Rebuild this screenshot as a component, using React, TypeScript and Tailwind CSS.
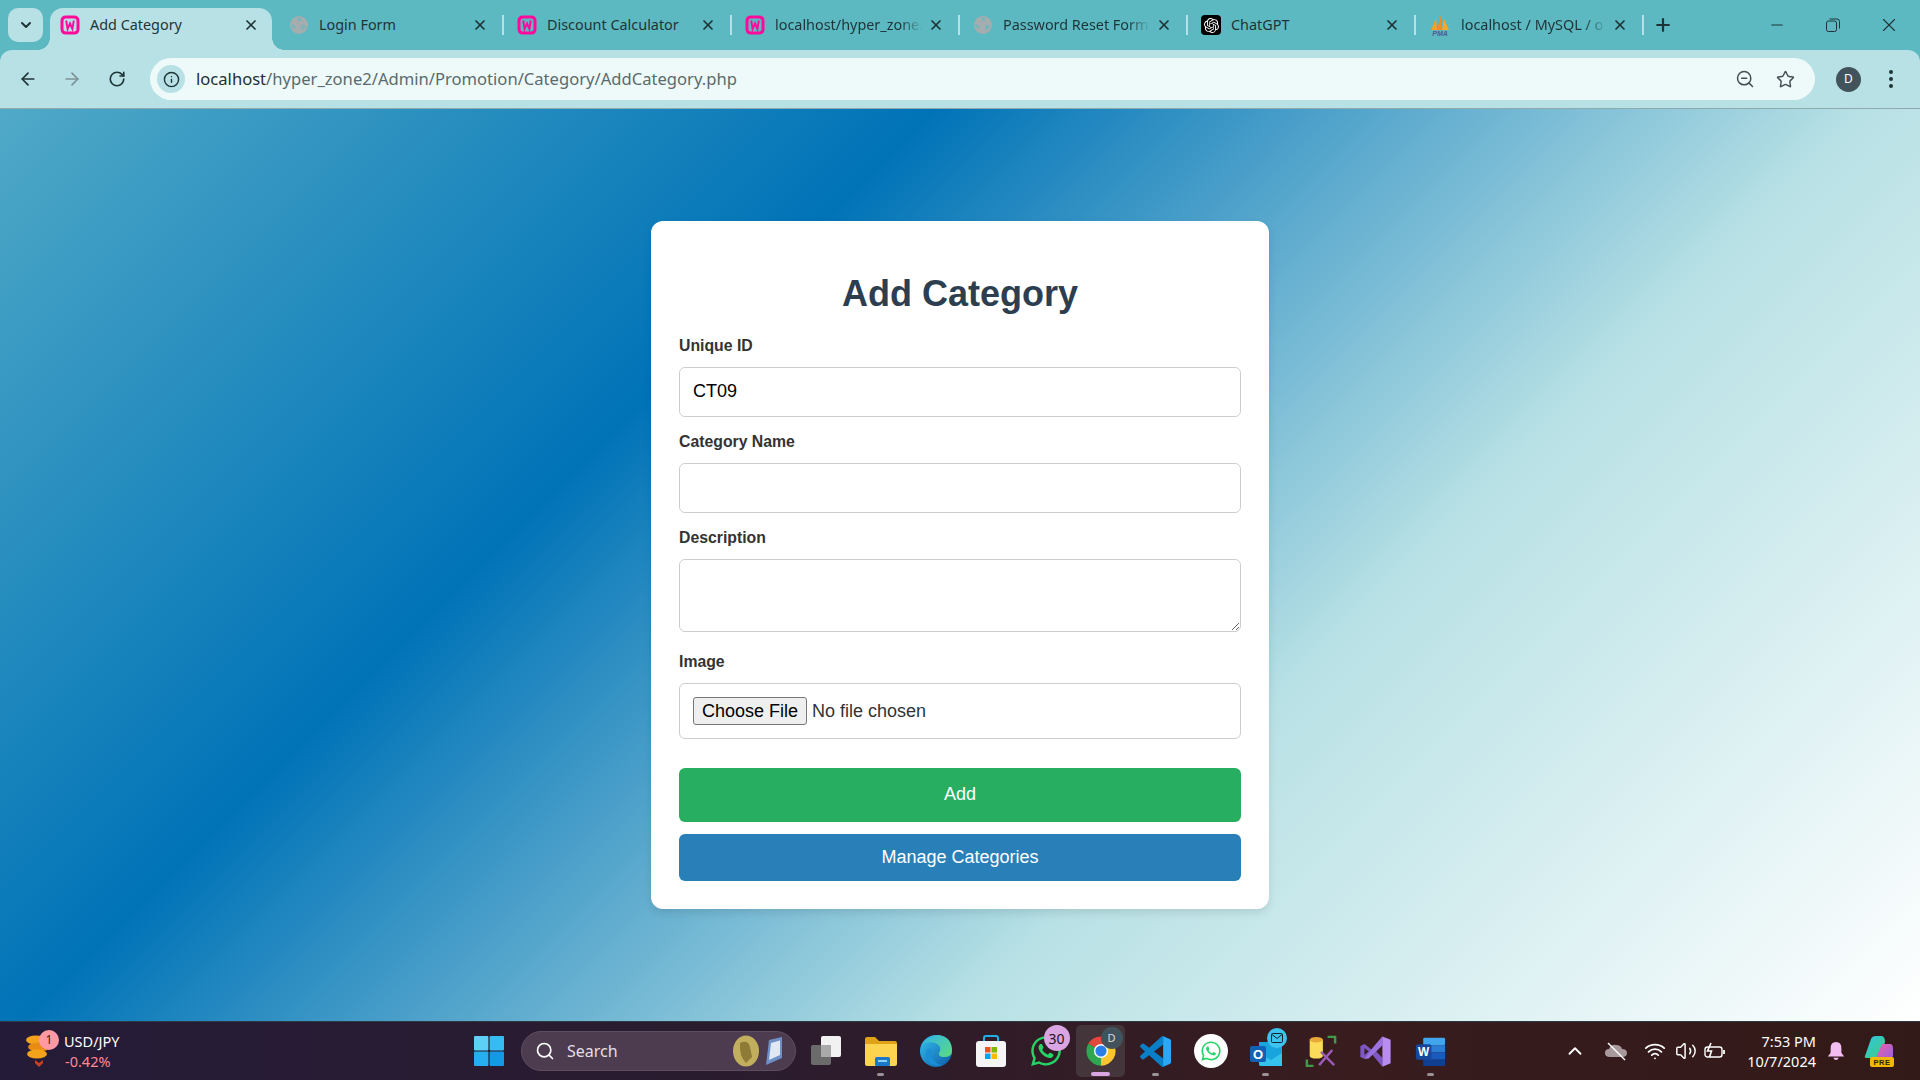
import {
	ArrowLeft,
	ArrowRight,
	ChevronDown,
	ChevronUp,
	Info,
	Minus,
	Plus,
	RotateCw,
	Search,
	Star,
	Volume2,
	Wifi,
	X,
	ZoomOut,
} from "lucide-react";
import { FaWhatsapp } from "react-icons/fa";
import { SiOpenai } from "react-icons/si";
import type { ReactNode } from "react";

const WampIcon = () => (
	<svg viewBox="0 0 20 20" className="w-[20px] h-[20px] shrink-0">
		<path d="M2 6 Q2 2 6 2 H14 Q18 2 18 6 V14 Q18 18 14 18 H6 Q2 18 2 14 Z" fill="none" stroke="#ff0a9c" strokeWidth="3" />
		<path d="M6.2 5.5 L7.6 14 L10 8.5 L12.4 14 L13.8 5.5" fill="none" stroke="#ff0a9c" strokeWidth="1.9" />
	</svg>
);

const GlobeIcon = () => (
	<svg viewBox="0 0 20 20" className="w-[20px] h-[20px] shrink-0">
		<circle cx="10" cy="10" r="9" fill="#a5adae" />
		<path d="M9 2 Q14 3 12 6 Q9 7 8 5 Z M12 10 Q17 9 17 12 Q15 16 12 15 Z M2 9 Q6 9 7 12 Q6 14 4 14 Z" fill="#7fb3ba" />
	</svg>
);

const ChatGptIcon = () => (
	<span className="w-[20px] h-[20px] shrink-0 rounded-[4px] bg-black flex items-center justify-center">
		<SiOpenai className="text-white w-[15px] h-[15px]" />
	</span>
);

const PmaIcon = () => (
	<svg viewBox="0 0 22 22" className="w-[22px] h-[22px] shrink-0">
		<path d="M2 16 L7 4 L8 16 Z" fill="#f4a11c" />
		<path d="M8 16 L12 1 L13 16 Z" fill="#f68b1f" />
		<path d="M13 16 L15 5 L20 16 Z" fill="#f9a825" />
		<text x="11" y="21.5" textAnchor="middle" fontSize="7" fontWeight="700" fontStyle="italic" fill="#4d5a94" fontFamily="Liberation Sans, sans-serif">PMA</text>
	</svg>
);

type TabInfo = { title: string; icon: ReactNode; active?: boolean; fade?: boolean };

const tabs: TabInfo[] = [
	{ title: "Add Category", icon: <WampIcon />, active: true },
	{ title: "Login Form", icon: <GlobeIcon /> },
	{ title: "Discount Calculator", icon: <WampIcon /> },
	{ title: "localhost/hyper_zone2", icon: <WampIcon />, fade: true },
	{ title: "Password Reset Form", icon: <GlobeIcon />, fade: true },
	{ title: "ChatGPT", icon: <ChatGptIcon /> },
	{ title: "localhost / MySQL / o", icon: <PmaIcon />, fade: true },
];

function Tab({ tab }: { tab: TabInfo }) {
	if (tab.active) {
		return (
			<div className="relative w-[222px] mr-[7px] shrink-0 h-[42px] flex items-center pl-[10px] pr-[13px] pb-[8px] bg-[#b8e1e5] rounded-t-[13px] text-[#1f3437]">
				{tab.icon}
				<span className="ml-[10px] flex-1 whitespace-nowrap text-[14.4px]">{tab.title}</span>
				<X size={16} strokeWidth={2.6} className="shrink-0" />
				<span className="absolute bottom-0 left-[-12px] w-[12px] h-[12px] bg-[radial-gradient(circle_at_0_0,transparent_11.5px,#b8e1e5_12px)]" />
				<span className="absolute bottom-0 right-[-12px] w-[12px] h-[12px] bg-[radial-gradient(circle_at_100%_0,transparent_11.5px,#b8e1e5_12px)]" />
			</div>
		);
	}
	return (
		<div className="relative w-[228px] shrink-0 h-[42px] flex items-center pl-[10px] pr-[19px] pb-[8px] text-[#1f3437]">
			{tab.icon}
			<span
				className={`ml-[10px] flex-1 min-w-0 whitespace-nowrap text-[14.4px] ${
					tab.fade ? "[mask-image:linear-gradient(90deg,#000_85%,transparent)]" : ""
				}`}
			>
				{tab.title}
			</span>
			<X size={16} strokeWidth={2.6} className="ml-[6px] shrink-0" />
			<span className="absolute right-[3px] top-[7px] w-[2px] h-[20px] bg-[#b8e1e5]" />
		</div>
	);
}

function WindowsLogo() {
	return (
		<svg viewBox="0 0 30 30" className="w-[30px] h-[30px]">
			<rect x="0" y="0" width="14.4" height="14.4" rx="1" fill="#5cd0f7" />
			<rect x="15.6" y="0" width="14.4" height="14.4" rx="1" fill="#35bdf3" />
			<rect x="0" y="15.6" width="14.4" height="14.4" rx="1" fill="#27aef0" />
			<rect x="15.6" y="15.6" width="14.4" height="14.4" rx="1" fill="#1499e6" />
		</svg>
	);
}

const TaskView = () => (
	<svg viewBox="0 0 32 32" className="w-[32px] h-[32px]">
		<rect x="1" y="10" width="20" height="20" rx="2" fill="#6b6b6b" />
		<rect x="11" y="1" width="20" height="21" rx="2" fill="#f1f1f1" />
		<rect x="11" y="10" width="10" height="12" fill="#a9a9a9" />
	</svg>
);

const Folder = () => (
	<svg viewBox="0 0 34 34" className="w-[34px] h-[34px]">
		<path d="M1 5 Q1 3 3 3 H11 L15 7 H31 Q33 7 33 9 V12 H1 Z" fill="#e0a317" />
		<path d="M1 10 H33 V30 Q33 32 31 32 H3 Q1 32 1 30 Z" fill="#fcd44f" />
		<rect x="11" y="23" width="15" height="9" rx="1.5" fill="#1a78c8" />
		<rect x="14" y="26" width="9" height="2" fill="#8fd0f5" />
	</svg>
);

const Edge = () => (
	<svg viewBox="0 0 34 34" className="w-[34px] h-[34px]">
		<defs>
			<linearGradient id="edgeA" x1="0" y1="0" x2="1" y2="1">
				<stop offset="0" stopColor="#35c1f1" />
				<stop offset="1" stopColor="#0c59a4" />
			</linearGradient>
			<linearGradient id="edgeB" x1="0" y1="0" x2="1" y2="1">
				<stop offset="0" stopColor="#2fb4e8" />
				<stop offset="1" stopColor="#5edc7e" />
			</linearGradient>
		</defs>
		<circle cx="17" cy="17" r="16" fill="url(#edgeA)" />
		<path d="M3 11 Q9 1 20 1 Q33 3 33 17 Q33 23 25 23 Q19 23 20 19 Q24 12 16 9 Q8 7 3 11 Z" fill="url(#edgeB)" />
		<path d="M13 16 Q10 25 19 30 Q24 32 27 30 Q20 33 12 30 Q4 24 8 16 Q10 13 13 16 Z" fill="#1a8fd6" />
	</svg>
);

const Store = () => (
	<svg viewBox="0 0 34 34" className="w-[34px] h-[34px]">
		<path d="M10 9 V4 Q10 2 12 2 H22 Q24 2 24 4 V9" fill="none" stroke="#1fb0ea" strokeWidth="2" />
		<rect x="2" y="7" width="30" height="26" rx="3" fill="#f5f5f5" />
		<rect x="11" y="13" width="5.5" height="5.5" fill="#f25022" />
		<rect x="17.5" y="13" width="5.5" height="5.5" fill="#7fba00" />
		<rect x="11" y="19.5" width="5.5" height="5.5" fill="#00a4ef" />
		<rect x="17.5" y="19.5" width="5.5" height="5.5" fill="#ffb900" />
	</svg>
);

const Chrome = () => (
	<svg viewBox="0 0 24 24" className="w-[32px] h-[32px]">
		<path d="M12 12 L21.5 6.5 A11 11 0 0 0 2.5 6.5 Z" fill="#e2483c" />
		<path d="M12 12 L21.5 6.5 A11 11 0 0 1 12 23 Z" fill="#fbc52f" />
		<path d="M12 12 L12 23 A11 11 0 0 1 2.5 6.5 Z" fill="#2fa750" />
		<circle cx="12" cy="12" r="5.3" fill="#fff" />
		<circle cx="12" cy="12" r="4.2" fill="#2b7de9" />
	</svg>
);

const VsCode = () => (
	<svg viewBox="0 0 24 24" className="w-[31px] h-[31px]">
		<path
			d="M23.15 2.587L18.21.21a1.494 1.494 0 0 0-1.705.29l-9.46 8.63-4.12-3.128a.999.999 0 0 0-1.276.057L.327 7.261A1 1 0 0 0 .326 8.74L3.899 12 .326 15.26a1 1 0 0 0 .001 1.479L1.65 17.94a.999.999 0 0 0 1.276.057l4.12-3.128 9.46 8.63a1.492 1.492 0 0 0 1.704.29l4.942-2.377A1.5 1.5 0 0 0 24 20.06V3.939a1.5 1.5 0 0 0-.85-1.352zm-5.146 14.861L10.826 12l7.178-5.448v10.896z"
			fill="#0a7fc9"
		/>
		<path d="M18 .3 L23.2 2.6 Q24 3 24 4 V20 Q24 21 23.2 21.4 L18 23.7 Z" fill="#2aa8f2" />
	</svg>
);

const Outlook = () => (
	<svg viewBox="0 0 34 34" className="w-[34px] h-[34px]">
		<path d="M10 8 H31 Q33 8 33 10 V32 H12 Q10 32 10 30 Z" fill="#18a5dd" />
		<path d="M10 19 L22 26 L33 19 V32 H12 Q10 32 10 30 Z" fill="#35c3ec" />
		<rect x="1" y="12" width="16" height="16" rx="2" fill="#0f62b6" />
		<text x="9" y="25" textAnchor="middle" fontSize="13" fontWeight="700" fill="#fff" fontFamily="Liberation Sans, sans-serif">O</text>
	</svg>
);

const DbTool = () => (
	<svg viewBox="0 0 34 34" className="w-[32px] h-[32px]">
		<path d="M5 5 V22 Q5 25 12 25 Q19 25 19 22 V5 Z" fill="#fbdc5a" />
		<ellipse cx="12" cy="5" rx="7" ry="3" fill="#e8a93a" />
		<path d="M2 26 V33 H9 M24 2 H32 V9" fill="none" stroke="#3f9a4a" strokeWidth="2.6" />
		<path d="M15 32 L29 16 M17 18 L31 32" stroke="#9a5bb8" strokeWidth="2.6" fill="none" />
	</svg>
);

const VisualStudio = () => (
	<svg viewBox="0 0 24 24" className="w-[33px] h-[33px]">
		<path d="M1 8 L4 6.5 L9 10.5 L17 1 V7.5 L12.5 12 L17 16.5 V23 L9 13.5 L4 17.5 L1 16 Z M4 9.5 V14.5 L7 12 Z" fillRule="evenodd" fill="#7e57c2" />
		<path d="M9 10.5 L17 1 V7.5 L7 17 L4 17.5 Z" fill="#9c72e0" />
		<path d="M17 1 L23 3.5 V20.5 L17 23 Z" fill="#b98cf2" />
	</svg>
);

const Word = () => (
	<svg viewBox="0 0 34 34" className="w-[31px] h-[31px]">
		<rect x="9" y="2" width="24" height="8" rx="1.5" fill="#41a5ee" />
		<rect x="9" y="10" width="24" height="8" fill="#2b7cd3" />
		<rect x="9" y="18" width="24" height="8" fill="#185abd" />
		<rect x="9" y="26" width="24" height="7" rx="1.5" fill="#103f91" />
		<rect x="1" y="9" width="17" height="17" rx="2" fill="#15479d" />
		<text x="9.5" y="22" textAnchor="middle" fontSize="13" fontWeight="700" fill="#fff" fontFamily="Liberation Sans, sans-serif">W</text>
	</svg>
);

const Coins = () => (
	<svg viewBox="0 0 28 36" className="w-[28px] h-[36px]">
		<ellipse cx="11" cy="7" rx="10" ry="4.5" fill="#f4a11c" />
		<ellipse cx="14" cy="14" rx="11" ry="4.5" fill="#e88d12" />
		<ellipse cx="12" cy="21" rx="10" ry="4.5" fill="#f4a11c" />
		<path d="M10 27 L14 30 L18 27 L18 30 L14 34 L10 30 Z" fill="#c9401c" />
	</svg>
);

const Medal = () => (
	<svg viewBox="0 0 52 32" className="w-[52px] h-[32px]">
		<path d="M38 5 L51 2 V23 L35 30 Z" fill="#6f90c7" />
		<path d="M40 8 L49 5.5 V20 L38 25 Z" fill="#dfe8f4" />
		<ellipse cx="15" cy="16" rx="13" ry="15.5" fill="#c2af5e" />
		<path d="M9 8 Q17 4 19 12 L21 22 L15 28 Q8 21 9 8 Z" fill="#8d7b36" />
	</svg>
);

const Copilot = () => (
	<svg viewBox="0 0 34 34" className="w-[34px] h-[34px]">
		<defs>
			<linearGradient id="copA" x1="0" y1="0" x2="1" y2="1">
				<stop offset="0" stopColor="#2fc4e8" />
				<stop offset="1" stopColor="#3fcf7a" />
			</linearGradient>
			<linearGradient id="copB" x1="0" y1="0" x2="1" y2="1">
				<stop offset="0" stopColor="#f25fa8" />
				<stop offset="1" stopColor="#8e63e0" />
			</linearGradient>
		</defs>
		<path d="M4 22 L10 5 Q11 2 15 2 H21 Q24 3 24 8 L19 24 H6 Q3 24 4 22 Z" fill="url(#copA)" />
		<path d="M15 24 L21 10 H30 Q32 11 32 14 V22 Q30 27 25 27 H15 Z" fill="url(#copB)" />
		<rect x="9" y="23" width="24" height="10" rx="2" fill="#f5b800" />
		<text x="21" y="31" textAnchor="middle" fontSize="7.5" fontWeight="700" fill="#2a2205" fontFamily="Liberation Sans, sans-serif" letterSpacing="0.6">PRE</text>
	</svg>
);

function TaskIcon({ children, dot, active }: { children: ReactNode; dot?: boolean; active?: boolean }) {
	return (
		<div className="relative w-[55px] h-[52px] shrink-0 flex items-center justify-center">
			{active && <span className="absolute inset-y-0 left-[3px] right-[3px] rounded-[5px] bg-[#43353a]" />}
			<span className="relative flex">{children}</span>
			{dot && <span className="absolute bottom-[1px] left-[24px] w-[7px] h-[3px] rounded-full bg-[#9a9296]" />}
			{active && <span className="absolute bottom-[1px] left-[18px] w-[19px] h-[4px] rounded-full bg-[#d9a5e3]" />}
		</div>
	);
}

function Field({ label, children }: { label: string; children: ReactNode }) {
	return (
		<div>
			<label className="block font-bold text-[15.8px] leading-[18px] text-[#333333] mb-[12px]">{label}</label>
			{children}
		</div>
	);
}

export default function App() {
	return (
		<div className="w-[1920px] h-[1080px] flex flex-col overflow-hidden font-['Liberation_Sans',Arial,sans-serif]">
			{/* browser chrome */}
			<div className="bg-[#5cb8c1] shrink-0 font-['Noto_Sans',sans-serif]">
				<div className="h-[50px] flex items-end">
					<div className="w-[35px] h-[34px] ml-[8px] mb-[8px] mr-[7px] rounded-[10px] bg-[#b8e1e5] flex items-center justify-center shrink-0">
						<ChevronDown size={16} strokeWidth={3} className="text-[#1f3437]" />
					</div>
					{tabs.map((tab) => (
						<Tab key={tab.title} tab={tab} />
					))}
					<Plus size={20} strokeWidth={2.6} className="ml-[6px] mb-[15px] text-[#1f3437] shrink-0" />
					<div className="ml-auto pr-[3px] flex items-center h-full self-start">
						<div className="w-[55px] flex justify-center"><Minus size={18} strokeWidth={1.4} className="text-[#1f3437]" /></div>
						<div className="w-[57px] flex justify-center">
							<svg viewBox="0 0 14 14" className="w-[14px] h-[14px]" fill="none" stroke="#1f3437" strokeWidth="1">
								<rect x="0.5" y="3" width="10" height="10.5" rx="2" />
								<path d="M3.5 1 H11 Q13.5 1 13.5 3.5 V10.5" />
							</svg>
						</div>
						<div className="w-[56px] flex justify-center"><X size={22} strokeWidth={1.2} className="text-[#1f3437]" /></div>
					</div>
				</div>
				<div className="h-[59px] bg-[#b8e1e5] rounded-t-[12px] border-b border-[#8fa9ad] flex items-center">
					<div className="w-[150px] flex items-center shrink-0 text-[#1f3437]">
						<ArrowLeft size={20} strokeWidth={2} className="ml-[18px]" />
						<ArrowRight size={20} strokeWidth={2} className="ml-[24px] text-[#7d9295]" />
						<RotateCw size={18} strokeWidth={2.2} className="ml-[26px]" />
					</div>
					<div className="w-[1665px] h-[42px] rounded-full bg-[#edfaf9] flex items-center shrink-0">
						<div className="ml-[7px] w-[28px] h-[28px] rounded-full bg-[#b8e1e5] flex items-center justify-center">
							<Info size={17} strokeWidth={2} className="text-[#1f3437]" />
						</div>
						<span className="ml-[11px] text-[16.6px] text-[#1f2f32] whitespace-nowrap">
							localhost<span className="text-[#5a6a6d]">/hyper_zone2/Admin/Promotion/Category/AddCategory.php</span>
						</span>
						<ZoomOut size={20} strokeWidth={1.8} className="ml-auto text-[#444f52]" />
						<Star size={19} strokeWidth={1.8} className="ml-[21px] mr-[20px] text-[#444f52]" />
					</div>
					<div className="ml-[21px] w-[25px] h-[25px] rounded-full bg-[#42535c] text-white text-[12px] flex items-center justify-center shrink-0">D</div>
					<div className="ml-[28px] flex flex-col gap-[3px] shrink-0">
						<span className="w-[4px] h-[4px] rounded-full bg-[#1f3437]" />
						<span className="w-[4px] h-[4px] rounded-full bg-[#1f3437]" />
						<span className="w-[4px] h-[4px] rounded-full bg-[#1f3437]" />
					</div>
				</div>
			</div>

			{/* page */}
			<main className="h-[912px] shrink-0 flex justify-center items-start bg-[linear-gradient(135deg,#50a9c7_0%,#0073b7_33%,#b8e1e5_66%,#ffffff_100%)] pt-[112px]">
				<form className="w-[618px] h-[688px] bg-white rounded-[12px] shadow-[0_4px_8px_rgba(0,0,0,0.1)] px-[28px] pt-[51px]">
					<h1 className="text-center text-[36px] leading-[44px] font-bold text-[#2c3e50] mb-[21px]">Add Category</h1>
					<div className="flex flex-col gap-[16px]">
						<Field label="Unique ID">
							<input readOnly value="CT09" className="block w-full h-[50px] px-[13px] pb-[2px] border border-[#cccccc] rounded-[6px] text-[18px] text-black outline-none" />
						</Field>
						<Field label="Category Name">
							<input readOnly className="block w-full h-[50px] px-[13px] border border-[#cccccc] rounded-[6px] text-[18px] outline-none" />
						</Field>
						<Field label="Description">
							<textarea readOnly className="block w-full h-[73px] px-[13px] py-[10px] border border-[#cccccc] rounded-[6px] outline-none resize" />
						</Field>
						<div className="mt-[5px]">
							<Field label="Image">
								<input
									type="file"
									className="block w-full h-[56px] px-[13px] py-[13px] border border-[#cccccc] rounded-[6px] text-[18px] text-[#333333] file:h-[28px] file:w-[114px] file:mr-[5px] file:bg-[#efefef] file:border file:border-[#767676] file:rounded-[3px] file:text-black"
								/>
							</Field>
						</div>
					</div>
					<button type="button" className="block w-full h-[54px] mt-[29px] pb-[2px] rounded-[6px] bg-[#27ae60] text-white text-[18px]">
						Add
					</button>
					<button type="button" className="block w-full h-[47px] mt-[12px] rounded-[6px] bg-[#2980b9] text-white text-[18px]">
						Manage Categories
					</button>
				</form>
			</main>

			{/* taskbar */}
			<div className="h-[59px] shrink-0 flex items-center border-t border-[#2c3a44] bg-[linear-gradient(90deg,#241b38_0%,#2b1c2e_40%,#381c1e_70%,#321a18_100%)] text-white font-['Noto_Sans',sans-serif]">
				<div className="w-[461px] shrink-0 flex items-center pl-[25px]">
					<div className="relative w-[30px] h-[40px] flex items-center">
						<Coins />
						<span className="absolute left-[14px] top-[-1px] w-[20px] h-[20px] rounded-full bg-[#ff9aa5] text-[#3a1a1c] text-[12px] flex items-center justify-center">1</span>
					</div>
					<div className="ml-[9px] text-[14.5px] leading-[20px]">
						<div>USD/JPY</div>
						<div className="text-[#ff8a94] pl-[1px]">-0.42%</div>
					</div>
				</div>
				<div className="w-[60px] shrink-0 flex justify-center -ml-[2px]"><WindowsLogo /></div>
				<div className="w-[275px] h-[40px] shrink-0 ml-[2px] rounded-full bg-[#4d3b50] border border-[#5f4e62] flex items-center pl-[13px] pr-[12px]">
					<Search size={20} strokeWidth={2} className="text-white" />
					<span className="ml-[12px] text-[16px] text-[#e6dfe6]">Search</span>
					<span className="ml-auto flex"><Medal /></span>
				</div>
				<div className="flex items-center shrink-0 ml-[2px]">
					<TaskIcon><TaskView /></TaskIcon>
					<TaskIcon dot><Folder /></TaskIcon>
					<TaskIcon><Edge /></TaskIcon>
					<TaskIcon><Store /></TaskIcon>
					<TaskIcon>
						<FaWhatsapp className="text-[#25d366] w-[34px] h-[34px]" />
						<span className="absolute right-[-7px] top-[-9px] w-[26px] h-[26px] rounded-full bg-[#d9a5e3] text-[#1c1420] text-[14px] flex items-center justify-center">30</span>
					</TaskIcon>
					<TaskIcon active>
						<Chrome />
						<span className="absolute right-[-6px] top-[-8px] w-[22px] h-[22px] rounded-full bg-[#42535c] text-[#d8d8d8] text-[11px] flex items-center justify-center">D</span>
					</TaskIcon>
					<TaskIcon dot><VsCode /></TaskIcon>
					<TaskIcon>
						<span className="w-[34px] h-[34px] rounded-full bg-white flex items-center justify-center">
							<FaWhatsapp className="text-[#25d366] w-[22px] h-[22px]" />
						</span>
					</TaskIcon>
					<TaskIcon dot>
						<Outlook />
						<span className="absolute right-[-4px] top-[-6px] w-[20px] h-[20px] rounded-full bg-[#3cc4ef] flex items-center justify-center">
							<svg viewBox="0 0 12 10" className="w-[12px] h-[10px]" fill="none" stroke="#12242c" strokeWidth="1">
								<rect x="0.5" y="0.5" width="11" height="9" rx="1" />
								<path d="M1 1.5 L6 5.5 L11 1.5" />
							</svg>
						</span>
					</TaskIcon>
					<TaskIcon><DbTool /></TaskIcon>
					<TaskIcon><VisualStudio /></TaskIcon>
					<TaskIcon dot><Word /></TaskIcon>
				</div>
				<div className="ml-auto flex items-center shrink-0 pr-[25px]">
					<ChevronUp size={22} strokeWidth={2} />
					<svg viewBox="0 0 24 20" className="w-[24px] h-[20px] ml-[18px]">
						<path d="M6 16 Q1 16 1 12 Q1 8 5 8 Q7 3 12 4 Q17 4 18 8 Q23 8 23 12 Q23 16 18 16 Z" fill="#a89a9c" />
						<path d="M4 2 L21 19" stroke="#ffffff" strokeWidth="1.4" />
					</svg>
					<Wifi size={22} strokeWidth={2} className="ml-[16px]" />
					<Volume2 size={22} strokeWidth={1.6} className="ml-[9px]" />
					<svg viewBox="0 0 22 18" className="w-[22px] h-[18px] ml-[7px]" fill="none" stroke="#fff" strokeWidth="1.4">
						<rect x="1" y="5" width="17" height="10" rx="2.5" />
						<path d="M20 8 V12" strokeWidth="1.8" />
						<path d="M7 1 L3.5 9 H7.5 L5.5 15" strokeWidth="1.6" />
					</svg>
					<div className="ml-[18px] text-[14.5px] leading-[20px] text-right w-[72px] whitespace-nowrap">
						<div>7:53 PM</div>
						<div>10/7/2024</div>
					</div>
					<svg viewBox="0 0 20 22" className="w-[18px] h-[20px] ml-[11px]" fill="#f2bdf0">
						<path d="M10 1 Q16 1 16 8 V13 L19 17 H1 L4 13 V8 Q4 1 10 1 Z" />
						<path d="M7 18.5 H13 Q12 21 10 21 Q8 21 7 18.5 Z" />
					</svg>
					<span className="ml-[16px] flex"><Copilot /></span>
				</div>
			</div>
		</div>
	);
}
